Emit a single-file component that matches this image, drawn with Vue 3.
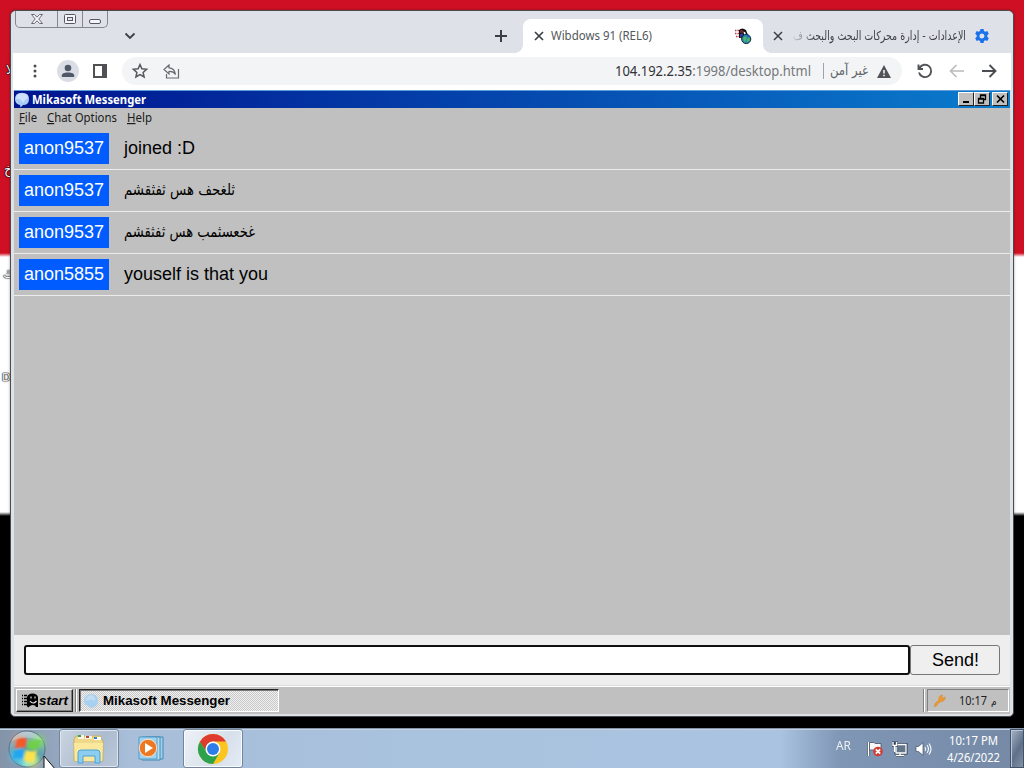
<script setup>
const messages = [
  { user: 'anon9537', text: 'joined :D', w: 71, rtl: false },
  { user: 'anon9537', text: 'ثلغحف هس ثفثقشم', w: 111, rtl: true },
  { user: 'anon9537', text: 'غخعسثمب هس ثفثقشم', w: 131, rtl: true },
  { user: 'anon5855', text: 'youself is that you', w: 144, rtl: false },
]
const menu = [
  { k: 'F', rest: 'ile', w: 18 },
  { k: 'C', rest: 'hat Options', w: 70 },
  { k: 'H', rest: 'elp', w: 25 },
]
</script>

<template>
  <div class="desktop">
    <span class="dlabel l1">ﻼ</span>
    <span class="dlabel l2">خ</span>
    <span class="dlabel l3">ك</span>
    <span class="dlabel l4">D</span>

    <div class="window">
      <div class="tabs">
        <div class="caption">
          <span class="cap c1"><svg width="14" height="12" viewBox="0 0 14 12"><path d="M1.500 1.500h3l2.500 2.700 2.500-2.700h3L8.800 6l3.700 4.500h-3L7 7.800l-2.500 2.700h-3L5.200 6z" fill="#f4f5f8" stroke="#6b6d74" /></svg></span>
          <span class="cap c2"><svg width="12" height="10" viewBox="0 0 12 10"><rect x=".5" y=".5" width="11" height="9" rx="1" fill="#f4f5f8" stroke="#555860" /><rect x="3.500" y="3.500" width="5" height="3" fill="#e2e4e9" stroke="#555860" /></svg></span>
          <span class="cap c3"><svg width="12" height="10" viewBox="0 0 12 10"><rect x=".5" y="5.500" width="11" height="4" rx="1.500" fill="#f4f5f8" stroke="#555860" /></svg></span>
        </div>
        <svg class="chev" width="12" height="8" viewBox="0 0 12 8"><path d="M1.500 1.500 6 6l4.500-4.500" fill="none" stroke="#3c4043" stroke-width="1.800" /></svg>
        <svg class="plus" width="14" height="14" viewBox="0 0 14 14"><path d="M7 1v12M1 7h12" stroke="#3c4043" stroke-width="2" /></svg>
        <div class="tab active">
          <svg width="10" height="10" viewBox="0 0 10 10"><path d="m1 1 8 8M9 1 1 9" stroke="#3c4043" stroke-width="1.700" /></svg>
          <svg class="tabtitle" width="104" height="18"><text x="0" y="13" textLength="101" lengthAdjust="spacingAndGlyphs">Wibdows 91 (REL6)</text></svg>
          <svg class="fav" width="18" height="18" viewBox="0 0 18 18">
            <path d="M1 3.500h4M1 6.500h4M2 9.500h4" stroke="#c03a4a" stroke-width="1.400" stroke-dasharray="1.500 1" />
            <path d="M5 3q3-3 7 0l2 5-3 5q-2-3-6-2z" fill="#111" />
            <path d="M6 3.500q2-1 3 0v2.500q-2-1-3 0z" fill="#7b2430" /><path d="m9.500 4.500 2 1 .5 3-2-1z" fill="#fff" /><path d="M6 7q2-1 3 0v3q-2-1-3 0z" fill="#3040a0" />
            <circle cx="12.200" cy="12" r="4.600" fill="#2b8ba8" stroke="#0e2a40" /><path d="M9 11q3-3 3.500 0l-1 4q-2-1-2.500-4M13 12l3-2-.5 4-2.500 1z" fill="#4fb56a" /><path d="m12 7.500 3 1 1 2-2-.5z" fill="#1e56c8" />
          </svg>
        </div>
        <svg class="close2" width="10" height="10" viewBox="0 0 10 10"><path d="m1 1 8 8M9 1 1 9" stroke="#3c4043" stroke-width="1.500" /></svg>
        <div class="settings">
          <svg class="artitle" width="175" height="22"><text x="175" y="15" direction="rtl" textLength="173" lengthAdjust="spacingAndGlyphs">الإعدادات - إدارة محركات البحث والبحث ف</text></svg>
        </div>
        <svg class="gear" width="14" height="14" viewBox="0 0 14 14"><path fill="#1a73e8" fill-rule="evenodd" d="M5.500 0h3l.5 2 1.300.8 2-.7 1.500 2.600L12.300 6.200v1.600l1.500 1.500-1.500 2.600-2-.7L9 12l-.5 2h-3L5 12l-1.300-.8-2 .7L.2 9.300l1.500-1.500V6.200L.2 4.700l1.500-2.600 2 .7L5 2zM7 4.500a2.500 2.500 0 1 0 0 5 2.500 2.500 0 0 0 0-5" /></svg>
      </div>

      <div class="toolbar">
        <svg class="dots" width="4" height="14" viewBox="0 0 4 14" fill="#4a4d51"><circle cx="2" cy="2" r="1.500" /><circle cx="2" cy="7" r="1.500" /><circle cx="2" cy="12" r="1.500" /></svg>
        <span class="avatar"><svg width="14" height="14" viewBox="0 0 14 14" fill="#4f5968"><circle cx="7" cy="4" r="3.300" /><path d="M.8 13v-2C1.300 9 5 8.500 7 8.500s5.700.5 6.200 2.500v2z" /></svg></span>
        <svg class="panel" width="14" height="14" viewBox="0 0 14 14"><path d="M1 1h12v12H1z" fill="#fff" stroke="#4f5154" stroke-width="2" /><path d="M9 1h4v12H9z" fill="#4f5154" /></svg>
        <div class="omnibox">
          <svg width="16" height="16" viewBox="0 0 16 16"><path d="m8 1.500 1.900 4.300 4.700.5-3.500 3.100 1 4.600L8 11.600 3.900 14l1-4.600-3.500-3.100 4.700-.5z" fill="none" stroke="#55585c" stroke-width="1.500" /></svg>
          <svg class="share" width="17" height="15" viewBox="0 0 17 15"><path d="M6 1 1 5.500 6 10V7.500c3-.2 5 .5 6.500 3-.5-4-3-6.500-6.500-6.700zM3.500 10v4h12V5" fill="none" stroke="#66696d" stroke-width="1.200" /></svg>
          <svg class="url" width="199" height="22"><text x="1" y="15.500" textLength="196" lengthAdjust="spacingAndGlyphs"><tspan fill="#303236">104.192.2.35</tspan><tspan fill="#74777b">:1998/desktop.html</tspan></text></svg>
          <span class="sep"></span>
          <svg class="unsafe" width="40" height="26"><text x="39" y="17" direction="rtl" textLength="38" lengthAdjust="spacingAndGlyphs">غير آمن</text></svg>
          <svg class="warn" width="14" height="13" viewBox="0 0 14 13"><path d="M7 0 14 13H0z" fill="#505357" /><path d="M7 5v3.500M7 9.800v1.500" stroke="#fff" stroke-width="1.500" /></svg>
        </div>
        <svg class="reload" width="16" height="16" viewBox="0 0 16 16"><path d="M2.500 5A6.200 6.200 0 1 1 2 9.500M1.500 1.500V6H6" fill="none" stroke="#505357" stroke-width="1.900" /></svg>
        <svg class="back" width="16" height="14" viewBox="0 0 16 14"><path d="M15 7H2M7.500 1l-6 6 6 6" fill="none" stroke="#b9bbbd" stroke-width="1.600" /></svg>
        <svg class="fwd" width="16" height="14" viewBox="0 0 16 14"><path d="M1 7h13M8.500 1l6 6-6 6" fill="none" stroke="#4a4d51" stroke-width="1.900" /></svg>
      </div>

      <div class="page">
        <div class="titlebar">
          <svg class="bubble" width="16" height="16" viewBox="0 0 16 16"><path d="M1 7Q1 .8 8 .8T15 7q0 6-6 6l-2.500 2.500L6 13Q1 12 1 7" fill="#a9ccf5" /><path d="M2 7q0-5.500 6-5.500T14 6q-3 1-5 5-3-5-7-4" fill="#cfe2fb" /></svg>
          <svg class="wtitle" width="120" height="17"><text x="1" y="13" textLength="114" lengthAdjust="spacingAndGlyphs">Mikasoft Messenger</text></svg>
          <span class="wbtn"><svg width="13" height="10" viewBox="0 0 13 10"><path d="M3 8h6" stroke="#000" stroke-width="2" /></svg></span>
          <span class="wbtn"><svg width="13" height="10" viewBox="0 0 13 10"><path d="M4.500 4V1h5v4.500H8M4 1.500h6M2.500 4.500h5v4.500h-5zM2 5h6" fill="none" stroke="#000" stroke-width="1.300" /></svg></span>
          <span class="wbtn last"><svg width="13" height="10" viewBox="0 0 13 10"><path d="m3 1.500 7 7m0-7-7 7" stroke="#000" stroke-width="1.700" /></svg></span>
        </div>
        <div class="menubar">
          <svg v-for="m in menu" :key="m.k" :width="m.w" height="19"><text x="0" y="14" :textLength="m.w" lengthAdjust="spacingAndGlyphs"><tspan class="u">{{ m.k }}</tspan>{{ m.rest }}</text></svg>
        </div>
        <div class="chat">
          <div v-for="(m, i) in messages" :key="i" class="msg">
            <span class="user">{{ m.user }}</span>
            <svg :width="m.w + 3" height="36" :class="{ ar: m.rtl }"><text :x="m.rtl ? m.w : 0" :y="m.rtl ? 21.500 : 23" :direction="m.rtl ? 'rtl' : 'ltr'" :textLength="m.w" lengthAdjust="spacingAndGlyphs">{{ m.text }}</text></svg>
          </div>
        </div>
        <div class="compose">
          <div class="field"></div>
          <div class="send">Send!</div>
        </div>
        <div class="bar">
          <div class="start">
            <svg width="17" height="15" viewBox="0 0 17 15"><path d="M0 2.500h1m1 0h3M0 5.500h1m1 0h3M0 8.500h1m1 0h3M0 11.500h1m1 0h3" stroke="#000" stroke-width="1.300" /><path d="M5 13V4q1-3.500 5.500-3.500T16 4v10h-2l-1-1.500q-3-1-5 .5l-2 1.500z" fill="#000" /><path d="M9 3.500v2m4-2v2M8 8q3 4 6.500 0" fill="none" stroke="#ddd" stroke-width="1.200" /></svg>
            <svg width="31" height="18"><text x="0" y="13" textLength="29" lengthAdjust="spacingAndGlyphs">start</text></svg>
          </div>
          <span class="grip"></span>
          <div class="task">
            <svg width="16" height="16" viewBox="0 0 16 16"><path d="M1 8q0-6 7-7 7 0 7 7 0 6-7 7l-3-2Q1 12 1 8" fill="#a9d0ee" /><path d="M3 8q0-5 5-6 5 1 4 6-4-3-9 0" fill="#c3def3" /></svg>
            <svg width="132" height="18"><text x="0" y="13" textLength="127" lengthAdjust="spacingAndGlyphs">Mikasoft Messenger</text></svg>
          </div>
          <span class="grip right"></span>
          <div class="tray">
            <svg width="13" height="13" viewBox="0 0 13 13"><path d="M1 12.500 2.500 9 6 6Q5 1.500 9.500 1l-.5 2.500 1 .8L12.300 3Q12 7.500 8 7.500L5 9.500 3.500 12z" fill="#f0982a" stroke="#c9873a" stroke-width=".5" /></svg>
            <svg class="clk" width="40" height="18"><text x="0" y="13" textLength="28" lengthAdjust="spacingAndGlyphs">10:17</text><text x="32" y="13" class="m">م</text></svg>
          </div>
        </div>
      </div>
    </div>

    <div class="osbar">
      <svg class="orb" width="54" height="40" viewBox="0 0 54 40">
        <defs>
          <radialGradient id="og" cx=".5" cy=".9" r=".9"><stop offset="0" stop-color="#7fe6e6" /><stop offset=".45" stop-color="#4f9cab" /><stop offset="1" stop-color="#a9bccb" /></radialGradient>
          <filter id="soft"><feGaussianBlur stdDeviation="0.8" /></filter>
          <filter id="glow" x="-50%" y="-50%" width="200%" height="200%"><feGaussianBlur stdDeviation="3" /></filter>
        </defs>
        <circle cx="27" cy="20" r="18" fill="url(#og)" stroke="#536f89" />
        <g filter="url(#glow)"><circle cx="19" cy="12" r="5" fill="#f58a5c" /><circle cx="38" cy="13" r="6" fill="#7ee05a" /><circle cx="17" cy="27" r="6" fill="#4cc4f5" /><circle cx="32" cy="31" r="6" fill="#f2ee6a" /></g>
        <g filter="url(#soft)"><path d="M17 11q5-4 10-1l-2 9q-5-2-10 1z" fill="#f4582b" /><path d="M29 11q6 3 12-1l-3 9q-6 3-11 0z" fill="#70cf48" /><path d="M14 22q5-3 10-1l-2 9q-5-2-9 0z" fill="#22a6f1" /><path d="M26 21q6 3 11 0l-3 10q-5 3-10 0z" fill="#fce34b" /></g>
        <path d="M11 12Q17 2 27 2.500T43 12q-16-7-32 0" fill="#fff" opacity=".25" />
      </svg>
      <div class="osbtn b1">
        <svg width="34" height="31" viewBox="0 0 34 31">
          <path d="M4 3h9l1 2h6V3h9v3l2 2v20H2V6z" fill="#eed889" stroke="#c9b15f" /><path d="M6 2h6v4H6zM13 3h7v3h-7z" fill="#f8f4e4" /><path d="M6 2h3v2H6z" fill="#3c9e55" /><path d="M14 3h3v2h-3z" fill="#b84a35" /><path d="M22 4h7v3h-7z" fill="#fff" /><path d="M22 4h3v2h-3z" fill="#3a82c4" />
          <path d="M2 10h29l-1 18H3z" fill="#fae99c" /><path d="M6 30V20q0-3 3-3h16q3 0 3 3v10h-5v-7H11v7z" fill="#8ccdf0" stroke="#4da2d3" />
        </svg>
      </div>
      <div class="osbtn b2">
        <svg width="30" height="28" viewBox="0 0 30 28"><path d="M9 2h17v22H9z" fill="#9fd0ec" stroke="#4589b4" /><path d="M5 2h18v23H5z" fill="#b8def2" stroke="#4589b4" /><path d="M2 2h18v22H2z" fill="#9fd3ef" stroke="#559ac3" /><circle cx="11" cy="13" r="8.700" fill="#ee7721" stroke="#fff0d9" stroke-width=".8" /><path d="m8 8 8 5-8 5z" fill="#fff" /></svg>
      </div>
      <div class="osbtn b3">
        <svg width="32" height="32" viewBox="0 0 32 32"><circle cx="16" cy="16" r="15" fill="#fbc51d" /><path d="M3 8.500A15 15 0 0 0 16 31l6.500-11.300L16 16l-6.500 3.700z" fill="#2da24c" /><path d="M3 8.500 9.500 19.700 16 16V8.500z" fill="#2da24c" /><path d="M3 8.500A15 15 0 0 1 29 8.500H16q-5 0-7 5l-1 3z" fill="#df3b30" /><circle cx="16" cy="16" r="7.500" fill="#fff" /><circle cx="16" cy="16" r="6" fill="#2f7de9" /></svg>
      </div>
      <div class="ostray">
        <svg class="lang" width="16" height="18"><text x="0" y="13" textLength="15" lengthAdjust="spacingAndGlyphs">AR</text></svg>
        <svg class="ic1" width="17" height="16" viewBox="0 0 17 16"><path d="M1.500 1v14" stroke="#3d4b5e" stroke-width="3" /><path d="M1.500 1v14" stroke="#fff" stroke-width="1.500" /><path d="M2.500 1.500H7l1 1h6V9H2.500z" fill="#f5f7fa" stroke="#475466" stroke-width=".8" /><circle cx="11" cy="10.500" r="4.800" fill="#d33c35" /><path d="m8.800 8.300 4.400 4.400m0-4.400-4.400 4.400" stroke="#fff" stroke-width="1.700" /></svg>
        <svg class="ic2" width="17" height="16" viewBox="0 0 17 16"><path d="M5 3.500h10v8.500H5zM5 14.500h8M9 12v2" fill="#64758a" stroke="#2d3c50" stroke-width="3" /><path d="M5 3.500h10v8.500H5zM5 14.500h8M9 12v2" fill="#64758a" stroke="#fff" stroke-width="1.300" /><path d="M1 .5h5.500V6H1z" fill="#2d3c50" /><path d="M2 1v3.500h3.500V1M3.700 5v6" fill="none" stroke="#fff" stroke-width="1.400" /></svg>
        <svg class="ic3" width="17" height="14" viewBox="0 0 17 14"><path d="M1 4.500h2.500L8 .7v12.600L3.500 9.500H1z" fill="#fff" stroke="#435163" stroke-width=".7" /><path d="M10 5q1.500 2 0 4M12 3q3 4 0 8M14 1.500q4 5.500 0 11" fill="none" stroke="#f2f5f9" stroke-width="1.200" /></svg>
        <svg class="clock" width="56" height="38"><text x="3" y="15" textLength="49" lengthAdjust="spacingAndGlyphs">10:17 PM</text><text x="1" y="32" textLength="53" lengthAdjust="spacingAndGlyphs">4/26/2022</text></svg>
      </div>
      <span class="peek"></span>
    </div>
    <svg class="cursor" width="14" height="12" viewBox="0 0 14 12"><path d="M1 0v14h12z" fill="#fff" stroke="#111" /></svg>
  </div>
</template>

<style>
body { overflow: hidden; }
</style>

<style scoped>
.desktop { position: relative; width: 1024px; height: 768px; overflow: hidden; background: linear-gradient(#cf1024 0 253px, #fff 257px 512px, #000 516px); font-family: "Noto Sans", sans-serif; }
svg { display: block; flex: none; overflow: visible; }
.dlabel { position: absolute; font: 13px "DejaVu Sans", sans-serif; color: #fff; text-shadow: 0 0 2px #000, 0 0 1px #000, 0 0 1px #000; }
.l1 { left: 6px; top: 62px; } .l2 { left: 4px; top: 162px; } .l3 { left: 3px; top: 266px; } .l4 { left: 2px; top: 371px; font-size: 11px; }
.window { position: absolute; left: 10px; top: 10px; width: 1004px; height: 707px; box-sizing: border-box; border: 1px solid #4a4b50; border-radius: 6px 6px 5px 5px; background: #dee1e6; overflow: hidden; display: flex; flex-direction: column; padding: 0 3px 2px; box-shadow: 0 0 3px #0005; }
.tabs { position: relative; height: 42px; flex: none; display: flex; margin: 0 -3px; padding-left: 3px; background: #dee1e8; }
.caption { position: absolute; left: 4px; top: -1px; height: 17px; display: flex; border: 1px solid #85878e; border-top: 0; border-radius: 0 0 5px 5px; }
.cap { display: flex; align-items: center; justify-content: center; border-right: 1px solid #85878e; }
.cap:last-child { border: 0; }
.c1 { width: 41px; } .c2 { width: 24px; } .c3 { width: 24px; }
.chev { margin: 21px 0 0 110px; }
.plus { margin: 18px 0 0 358px; }
.tab { position: relative; height: 34px; margin: 8px 0 0 15px; width: 240px; box-sizing: border-box; border-radius: 8px 8px 0 0; background: #fff; display: flex; align-items: center; padding: 0 11px; }
.tab::before, .tab::after { content: ""; position: absolute; bottom: 0; width: 8px; height: 8px; }
.tab::before { left: -8px; background: radial-gradient(circle at 0 0, transparent 7.500px, #fff 8px); }
.tab::after { right: -8px; background: radial-gradient(circle at 100% 0, transparent 7.500px, #fff 8px); }
.tabtitle { font-size: 12px; fill: #54575b; margin-left: 7px; }
.fav { margin-left: auto; }
.close2 { margin: 20px 0 0 10px; }
.settings { margin: 14px 0 0 8px; -webkit-mask-image: linear-gradient(90deg, transparent, #000 24px); mask-image: linear-gradient(90deg, transparent, #000 24px); }
.artitle { font: 12.500px "DejaVu Sans", sans-serif; fill: #3f4246; }
.gear { margin: 18px 0 0 9px; }
.toolbar { height: 37px; flex: none; background: #fff; display: flex; align-items: center; margin: 0 -1px; padding: 0 0 1px; box-sizing: border-box; }
.dots { margin-left: 20px; }
.avatar { width: 22px; height: 22px; margin-left: 20px; border-radius: 50%; background: #dadee4; display: flex; align-items: center; justify-content: center; }
.panel { margin-left: 14px; }
.omnibox { width: 780px; height: 28px; margin-left: 15px; border-radius: 14px; background: #f3f4f5; display: flex; align-items: center; padding-left: 10px; box-sizing: border-box; }
.share { margin-left: 15px; }
.url { margin-left: 434px; font-size: 14px; }
.sep { width: 1px; height: 16px; margin-left: 10px; background: #a0a2a5; }
.unsafe { margin-left: 5px; font: 14px "DejaVu Sans", sans-serif; fill: #606368; }
.warn { margin-left: 8px; }
.reload { margin-left: 15px; } .back { margin-left: 16px; } .fwd { margin-left: 16px; }
.page { flex: 1; min-height: 0; display: flex; flex-direction: column; background: silver; }
.titlebar { height: 18px; flex: none; display: flex; align-items: center; box-sizing: border-box; background: linear-gradient(90deg, #00138f, #0a7ccd); border-top: 1px solid #5d9ed8; }
.wtitle { font-size: 11.500px; font-weight: 700; fill: #fff; margin-left: 1px; margin-right: auto; }
.wbtn { width: 16px; height: 14px; box-sizing: border-box; border: 1px solid; border-color: #fff #222 #222 #fff; background: silver; display: flex; align-items: center; justify-content: center; overflow: hidden; position: relative; top: -1px; }
.wbtn.last { margin: 0 2px 0 2px; }
.menubar { height: 19px; flex: none; display: flex; gap: 10px; padding-left: 5px; font-size: 12px; fill: #1b1b1b; }
.u { text-decoration: underline; }
.chat { flex: 1; min-height: 0; font: 18px "Liberation Sans", Arial, sans-serif; }
.msg { height: 42px; box-sizing: border-box; border-bottom: 1px solid #ececec; display: flex; padding: 3px 0 0 2px; }
.msg:first-child { height: 43px; padding-top: 4px; }
.user { width: 90px; height: 31px; margin: 2px 15px 0 3px; line-height: 30px; text-align: center; background: #005cff; color: #fff; }
.ar { font-family: "DejaVu Sans", sans-serif; font-size: 16px; }
.compose { height: 51px; flex: none; box-sizing: border-box; display: flex; padding: 10px 10px 0; background: #eee; border-bottom: 1px solid #ddd; }
.field { width: 886px; height: 30px; box-sizing: border-box; border: 2px solid #101010; border-radius: 3px; background: #fff; }
.send { width: 90px; height: 30px; box-sizing: border-box; border: 1px solid #767676; border-radius: 3px; background: #efefef; font: 18px/28px "Liberation Sans", Arial, sans-serif; text-align: center; padding-left: 1px; }
.bar { height: 28px; flex: none; box-sizing: border-box; border-top: 1px solid #fff; display: flex; padding: 2px 1px 0 2px; }
.start { width: 57px; height: 23px; box-sizing: border-box; border: 1px solid; border-color: #fff #222 #222 #fff; box-shadow: inset -1px -1px #808080; display: flex; align-items: center; padding-left: 5px; font: italic 700 12px "Liberation Sans", Arial, sans-serif; }
.grip { width: 2px; height: 23px; margin: 0 1px 0 2px; box-sizing: border-box; border-left: 1px solid #808080; border-right: 1px solid #fff; }
.task { width: 200px; height: 23px; box-sizing: border-box; margin-left: 1px; border: 1px solid; border-color: #222 #fff #fff #222; box-shadow: inset 1px 1px #777; background: repeating-conic-gradient(#f0f0f0 0 25%, #c8c8c8 0 50%) 0 0 / 2px 2px; display: flex; align-items: center; gap: 4px; padding-left: 3px; font: 700 12.500px "Liberation Sans", Arial, sans-serif; }
.grip.right { margin-left: auto; margin-right: 2px; }
.tray { width: 82px; height: 23px; box-sizing: border-box; border: 1px solid; border-color: #808080 #fff #fff #808080; display: flex; align-items: center; padding-left: 5px; }
.clk { margin-left: 13px; font: 12px "Noto Sans", sans-serif; fill: #202020; }
.m { font: 9px "DejaVu Sans", sans-serif; }
.osbar { position: absolute; left: 0; top: 728px; width: 1024px; height: 40px; box-sizing: border-box; border-top: 1px solid #8495ab; background: linear-gradient(90deg, #8393a8 0, #93a6be 55px, #a8bed9 130px, #a9c3df 500px, #a9c3e0 780px, #7f96b5 840px, #7589a5 1024px); display: flex; box-shadow: inset 0 1px #c5d2e1; }
.orb { width: 54px; }
.osbtn { height: 39px; box-sizing: border-box; display: flex; align-items: center; justify-content: center; border-radius: 3px; }
.b1 { width: 60px; margin-left: 5px; border: 1px solid #74869c; background: linear-gradient(120deg, #cbd5e1, #acbccf 60%, #bac8d9); box-shadow: inset 0 0 0 1px #dde6ef; }
.b2 { width: 64px; padding-left: 2px; }
.b3 { width: 60px; border: 1px solid #74869c; background: linear-gradient(120deg, #edf2f7, #d7e0ea 60%, #e4edf6); box-shadow: inset 0 0 0 1px #f8fbff; }
.ostray { margin-left: auto; display: flex; font-size: 12px; fill: #fff; padding-right: 8px; }
.lang { margin-top: 8px; margin-right: 15px; opacity: .85; }
.ic1 { margin-top: 12px; } .ic2 { margin: 12px 0 0 7px; } .ic3 { margin: 13px 0 0 7px; }
.clock { margin-left: 14px; margin-top: 1px; }
.peek { width: 14px; box-sizing: border-box; border: 1px solid #40536b; background: linear-gradient(120deg, #a6b3c4, #5e7089 55%, #8392a6); box-shadow: inset 1px 1px #b9c6d4; }
.cursor { position: absolute; left: 43px; top: 756px; }
</style>
